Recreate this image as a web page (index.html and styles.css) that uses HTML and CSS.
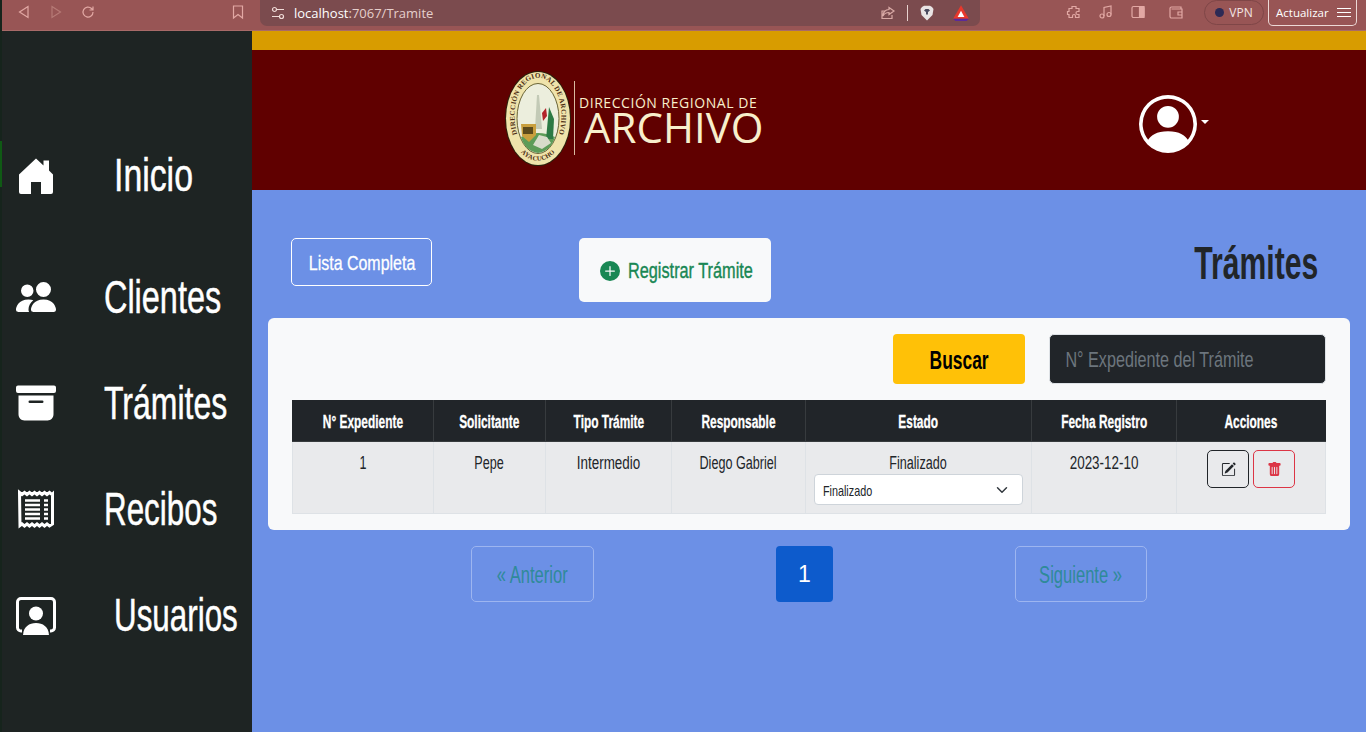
FILE: index.html
```html
<!DOCTYPE html>
<html lang="es">
<head>
  <meta charset="UTF-8" />
  <meta name="viewport" content="width=device-width, initial-scale=1.0"/>
  <title>Tramite</title>
  <link rel="stylesheet" href="styles.css">
</head>
<body>

  <!-- Browser bar -->
  <div class="browser-bar">
    <div class="bar-left">
      <svg class="bar-icon" viewBox="0 0 16 16"><path d="M12 2.5 3.5 8l8.500 5.500z"/></svg>
      <svg class="bar-icon dim" viewBox="0 0 16 16"><path d="M4 2.500 12.500 8 4 13.500z"/></svg>
      <svg class="bar-icon" viewBox="0 0 16 16"><path d="M13 8a5 5 0 1 1-1.500-3.500L13 6M13 2.500V6H9.500"/></svg>
      <svg class="bar-icon bookmark" viewBox="0 0 16 16"><path d="M3.500 2h9v12L8 10.500 3.500 14z"/></svg>
    </div>
    <div class="address">
      <svg class="bar-icon tune" viewBox="0 0 16 16"><circle cx="4.500" cy="4.500" r="2"/><path d="M7 4.500h7M2 11.500h7"/><circle cx="11.500" cy="11.500" r="2"/></svg>
      <span class="url"><b>localhost</b>:7067/Tramite</span>
      <svg class="bar-icon share" viewBox="0 0 16 16"><path d="M9 2.500 14 6l-5 3.500V7.500C6 7.500 4 9 3 11c0-4 2.500-6.500 6-6.500zM12 10v3.500H2V6h2.500"/></svg>
      <span class="addr-sep"></span>
      <svg class="shield" viewBox="0 0 16 16"><path d="M3 2 5 .8h6L13 2l1.500 2-1 6L8 15.500 2.500 10l-1-6z"/><path class="shield-face" d="M5 5.500 7 7v2L8 10l1-1V7l2-1.500L9.500 4h-3z"/></svg>
      <svg class="rewards" viewBox="0 0 16 16"><path class="tri-red" d="M8 1 15 13H1z"/><path class="tri-white" d="M8 6 11 11.500H5z"/><path class="tri-purple" d="M1 13h14l-2 2H3z"/></svg>
    </div>
    <div class="bar-right">
      <svg class="bar-icon" viewBox="0 0 16 16"><path d="M6 2.500h4v2h3v3h-1.500a1.500 1.500 0 0 0 0 3H13v3H9.500V12a1.500 1.500 0 0 0-3 0v1.500H3v-3H1.500v-3H3v-3h3z"/></svg>
      <svg class="bar-icon" viewBox="0 0 16 16"><path d="M6 12V3.500l7-1.500v8.500"/><circle cx="4" cy="12" r="2"/><circle cx="11" cy="10.500" r="2"/></svg>
      <svg class="bar-icon" viewBox="0 0 16 16"><rect x="2" y="2.500" width="12" height="11" rx="1.500"/><path class="panel-fill" d="M9.500 2.500H14v11H9.500z"/></svg>
      <svg class="bar-icon wallet" viewBox="0 0 16 16"><path d="M13 5V3H3.500A1.500 1.500 0 0 0 2 4.500v8A1.500 1.500 0 0 0 3.500 14H14V5H3.500M10 8h4v3h-4z"/></svg>
      <div class="vpn"><span class="vpn-dot"></span>VPN</div>
      <div class="update">Actualizar<span class="burger"><i></i><i></i><i></i></span></div>
    </div>
  </div>

  <div class="app">
    <!-- Sidebar -->
    <nav class="sidebar">
      <a class="nav-item first">
        <svg class="nav-icon" viewBox="0 0 40 40"><path d="M3 19.500 20 3.500l7.500 7V5.500H33V15.500l4 4V37a2 2 0 0 1-2 2H25V27H15V39H5a2 2 0 0 1-2-2z"/></svg>
        <span class="nav-text indent home">Inicio</span>
      </a>
      <a class="nav-item">
        <svg class="nav-icon" viewBox="0 0 16 16"><path d="M7 14s-1 0-1-1 1-4 5-4 5 3 5 4-1 1-1 1H7Zm4-6a3 3 0 1 0 0-6 3 3 0 0 0 0 6Zm-5.784 6A2.238 2.238 0 0 1 5 13c0-1.355.68-2.750 1.936-3.720A6.325 6.325 0 0 0 5 9c-4 0-5 3-5 4s1 1 1 1h4.216ZM4.500 8a2.500 2.500 0 1 0 0-5 2.500 2.500 0 0 0 0 5Z"/></svg>
        <span class="nav-text clients">Clientes</span>
      </a>
      <a class="nav-item">
        <svg class="nav-icon" viewBox="0 0 16 16"><path d="M12.643 15C13.979 15 15 13.845 15 12.500V5H1v7.500C1 13.845 2.021 15 3.357 15h9.286zM5.500 7h5a.5.5 0 0 1 0 1h-5a.5.5 0 0 1 0-1zM.8 1a.8.8 0 0 0-.8.8v1.400a.8.8 0 0 0 .8.8h14.400a.8.8 0 0 0 .8-.8V1.800a.8.8 0 0 0-.8-.8H.8z"/></svg>
        <span class="nav-text">Trámites</span>
      </a>
      <a class="nav-item">
        <svg class="nav-icon" viewBox="0 0 40 40"><path class="receipt" d="M3.500 3.500l2.500 2 2.500-2 2.500 2 2.500-2 2.500 2 2.500-2 2.500 2 2.500-2 2.500 2 2.500-2 2.500 2 2.500-2 2.500 2 .5-.5V35l-3 2-2.500-2-2.500 2-2.500-2-2.500 2-2.500-2-2.500 2-2.500-2-2.500 2-2.500-2-2.500 2-2.500-2-2 1.500z"/><path class="receipt-lines" d="M9 11.500h15M9 16h15M9 20.500h15M9 25h15M9 29.500h15M28 11.500h4M28 16h4M28 20.500h4M28 25h4M28 29.500h4"/></svg>
        <span class="nav-text small">Recibos</span>
      </a>
      <a class="nav-item">
        <svg class="nav-icon" viewBox="0 0 40 40"><path class="screen" d="M6 36H5a3.500 3.500 0 0 1-3.500-3.500V7A3.500 3.500 0 0 1 5 3.500h30A3.500 3.500 0 0 1 38.500 7v25.500A3.500 3.500 0 0 1 35 36h-1"/><circle cx="20" cy="18.500" r="7"/><path d="M7 41c0-9 6-13 13-13s13 4 13 13z"/></svg>
        <span class="nav-text indent small">Usuarios</span>
      </a>
    </nav>

    <div class="main">
      <div class="gold-bar"></div>

      <header class="top-header">
        <div class="logo">
          <svg class="seal" viewBox="0 0 66 95">
            <defs>
              <path id="sealTop" d="M13.500 66A23.500 38 0 1 1 52.500 66"/>
              <path id="sealBottom" d="M14 79A29 43.500 0 0 0 52 79"/>
            </defs>
            <ellipse cx="33" cy="47.500" rx="33" ry="47.500" fill="#2a210c"/>
            <ellipse cx="33" cy="47.500" rx="32" ry="46.500" fill="#efe3ab"/>
            <ellipse cx="33" cy="47.500" rx="21" ry="35" fill="#eceedd" stroke="#6a6436"/>
            <path d="M16 66Q33 58 50 66Q46 80 33 82Q20 80 16 66Z" fill="#5d9c58"/>
            <path d="M30 58 32 24h2l3 34z" fill="#c3cab6"/>
            <path d="M16 53h15v11l-7 7-7-6z" fill="#c99f3e"/>
            <path d="M18 56h10v7H18z" fill="#5c4a1c"/>
            <path d="M44 36l5 12-1 20H41z" fill="#2d7a45"/>
            <path d="M37 42l4-5 1 8-4 5z" fill="#b3232a"/>
            <path d="M28 74l6-10 8 2 4 6-9 6z" fill="#d8dccb"/>
            <text class="seal-text"><textPath href="#sealTop" startOffset="50%" text-anchor="middle">DIRECCIÓN REGIONAL DE ARCHIVO</textPath></text>
            <text class="seal-text low"><textPath href="#sealBottom" startOffset="50%" text-anchor="middle">AYACUCHO</textPath></text>
          </svg>
          <span class="logo-sep"></span>
          <div class="logo-text">
            <div class="logo-small">DIRECCIÓN REGIONAL DE</div>
            <div class="logo-big">ARCHIVO</div>
          </div>
        </div>
        <div class="user-menu">
          <svg class="avatar" viewBox="0 0 16 16"><path d="M11 6a3 3 0 1 1-6 0 3 3 0 0 1 6 0z"/><path fill-rule="evenodd" d="M0 8a8 8 0 1 1 16 0A8 8 0 0 1 0 8zm8-7a7 7 0 0 0-5.468 11.370C3.242 11.226 4.805 10 8 10s4.757 1.225 5.468 2.370A7 7 0 0 0 8 1z"/></svg>
          <span class="caret"></span>
        </div>
      </header>

      <section class="content">
        <div class="toolbar">
          <button class="btn-outline"><span class="narrow">Lista Completa</span></button>
          <button class="btn-register">
            <svg viewBox="0 0 16 16"><path d="M16 8A8 8 0 1 1 0 8a8 8 0 0 1 16 0zM8.500 4.500a.5.5 0 0 0-1 0v3h-3a.5.5 0 0 0 0 1h3v3a.5.5 0 0 0 1 0v-3h3a.5.5 0 0 0 0-1h-3v-3z"/></svg>
            <span class="narrow">Registrar Trámite</span>
          </button>
          <h1><span class="narrow">Trámites</span></h1>
        </div>

        <div class="card">
          <div class="search-row">
            <button class="btn-search"><span class="narrow">Buscar</span></button>
            <div class="search-box">
              <input class="search-input" type="text" placeholder="N° Expediente del Trámite">
            </div>
          </div>
          <table class="data-table">
            <colgroup>
              <col class="c1"><col class="c2"><col class="c3"><col class="c4"><col class="c5"><col class="c6"><col class="c7">
            </colgroup>
            <thead>
              <tr>
                <th><span class="narrow">N° Expediente</span></th>
                <th><span class="narrow">Solicitante</span></th>
                <th><span class="narrow">Tipo Trámite</span></th>
                <th><span class="narrow">Responsable</span></th>
                <th><span class="narrow">Estado</span></th>
                <th><span class="narrow">Fecha Registro</span></th>
                <th><span class="narrow">Acciones</span></th>
              </tr>
            </thead>
            <tbody>
              <tr>
                <td><span class="narrow">1</span></td>
                <td><span class="narrow">Pepe</span></td>
                <td><span class="narrow wider">Intermedio</span></td>
                <td><span class="narrow">Diego Gabriel</span></td>
                <td>
                  <span class="narrow">Finalizado</span>
                  <div class="state-box">
                    <select class="state-select"><option>Finalizado</option></select>
                  </div>
                </td>
                <td><span class="narrow wider">2023-12-10</span></td>
                <td>
                  <div class="actions">
                    <button class="btn-edit"><svg viewBox="0 0 16 16"><path d="M15.502 1.940a.5.5 0 0 1 0 .706L14.459 3.690l-2-2L13.502.646a.5.5 0 0 1 .707 0l1.293 1.293zm-1.750 2.456-2-2L4.939 9.210a.5.5 0 0 0-.121.196l-.805 2.414a.25.25 0 0 0 .316.316l2.414-.805a.5.5 0 0 0 .196-.12l6.813-6.814z"/><path fill-rule="evenodd" d="M1 13.500A1.500 1.500 0 0 0 2.500 15h11a1.500 1.500 0 0 0 1.500-1.500v-6a.5.5 0 0 0-1 0v6a.5.5 0 0 1-.5.5h-11a.5.5 0 0 1-.5-.5v-11a.5.5 0 0 1 .5-.5H9a.5.5 0 0 0 0-1H2.500A1.500 1.500 0 0 0 1 2.500v11z"/></svg></button>
                    <button class="btn-delete"><svg viewBox="0 0 16 16"><path d="M2.500 1a1 1 0 0 0-1 1v1a1 1 0 0 0 1 1H3v9a2 2 0 0 0 2 2h6a2 2 0 0 0 2-2V4h.5a1 1 0 0 0 1-1V2a1 1 0 0 0-1-1H10a1 1 0 0 0-1-1H7a1 1 0 0 0-1 1H2.500zm3 4a.5.5 0 0 1 .5.5v7a.5.5 0 0 1-1 0v-7a.5.5 0 0 1 .5-.5zM8 5a.5.5 0 0 1 .5.5v7a.5.5 0 0 1-1 0v-7A.5.5 0 0 1 8 5zm3 .5v7a.5.5 0 0 1-1 0v-7a.5.5 0 0 1 1 0z"/></svg></button>
                  </div>
                </td>
              </tr>
            </tbody>
          </table>
        </div>

        <div class="pager">
          <button class="page-btn prev"><span class="narrow">« Anterior</span></button>
          <button class="page-num">1</button>
          <button class="page-btn next"><span class="narrow">Siguiente »</span></button>
        </div>
      </section>
    </div>
  </div>

</body>
</html>
```

FILE: styles.css
```css
* {
  box-sizing: border-box;
}

html, body {
  height: 100%;
}

body {
  margin: 0;
  overflow: hidden;
  background-color: #16241c;
  font-family: "Liberation Sans", sans-serif;
  display: flex;
  flex-direction: column;
}

button {
  padding: 0;
  font-family: inherit;
  cursor: pointer;
}

/* no condensed family is installed, so the text is squeezed */
.narrow {
  display: inline-block;
  white-space: nowrap;
  transform: scaleX(0.7);
}

.narrow.wider {
  transform: scaleX(0.745);
}

/* Browser bar */
.browser-bar {
  height: 31px;
  margin-left: 2px;
  display: flex;
  background-color: #985555;
  border-bottom: 1px solid #a86a68;
  font-family: "Open Sans", sans-serif;
}

.bar-left {
  width: 258px;
  padding: 4px 0 0 14px;
  display: flex;
  gap: 16px;
}

.bar-icon {
  width: 16px;
  height: 16px;
  fill: none;
  stroke: #e2a8a4;
  stroke-width: 1.2;
}

.bar-icon.dim {
  stroke: #b67a76;
}

.bookmark {
  margin-left: 118px;
}

.address {
  width: 720px;
  height: 26px;
  padding: 0 10px;
  display: flex;
  align-items: center;
  background-color: #7b4b4e;
  border-radius: 0 0 7px 7px;
}

.tune {
  stroke: #f0dcd8;
}

.url {
  margin-left: 8px;
  font-size: 13px;
  color: #e6cfcc;
  flex: 1;
}

.url b {
  font-weight: 400;
  color: #fff;
}

.share {
  stroke: #d9a9a5;
}

.addr-sep {
  width: 1px;
  height: 16px;
  margin: 0 11px;
  background-color: #e8d2cf;
}

.shield {
  width: 16px;
  height: 16px;
  fill: #e9e4e4;
}

.shield-face {
  fill: #4a4a5e;
}

.rewards {
  width: 18px;
  height: 18px;
  margin-left: 17px;
}

.tri-red {
  fill: #e8382c;
}

.tri-white {
  fill: #fff;
}

.tri-purple {
  fill: #5b2a9a;
}

.bar-right {
  flex: 1;
  padding: 4px 9px 0 86px;
  display: flex;
  gap: 16px;
}

.panel-fill {
  fill: #e2a8a4;
}

.wallet {
  margin-left: 6px;
}

.vpn {
  width: 60px;
  height: 25px;
  margin: -4px -12px 0 4px;
  display: flex;
  align-items: center;
  justify-content: center;
  gap: 5px;
  font-size: 12px;
  color: #f4e6e4;
  border: 1px solid #7f4647;
  border-radius: 13px;
}

.vpn-dot {
  width: 9px;
  height: 9px;
  border-radius: 50%;
  background-color: #2c2a55;
}

.update {
  width: 89px;
  height: 26px;
  margin-top: -4px;
  padding: 0 5px 0 7px;
  display: flex;
  align-items: center;
  justify-content: space-between;
  font-size: 11.500px;
  color: #fff;
  border: 1px solid #ecd9d6;
  border-top: none;
  border-radius: 0 0 5px 5px;
}

.burger {
  width: 14px;
  display: flex;
  flex-direction: column;
  gap: 3px;
}

.burger i {
  height: 1px;
  background-color: #fff;
}

/* App layout */
.app {
  flex: 1;
  display: flex;
  min-height: 0;
}

.sidebar {
  position: relative;
  width: 250px;
  margin-left: 2px;
  padding-top: 91px;
  background-color: #1e2423;
}

.sidebar::before {
  content: "";
  position: absolute;
  left: -2px;
  top: 110px;
  width: 2px;
  height: 46px;
  background-color: #0f5a14;
}

.nav-item {
  height: 106px;
  padding-left: 14px;
  display: flex;
  align-items: center;
  gap: 48px;
  color: #fff;
}

.nav-item.first {
  margin-bottom: 16px;
}

.nav-icon {
  width: 40px;
  height: 40px;
  fill: #fff;
  flex: none;
}

.nav-text {
  white-space: nowrap;
  font-size: 46px;
  -webkit-text-stroke: 0.5px #fff;
  transform: scaleX(0.695);
  transform-origin: left center;
}

.nav-text.home {
  transform: scaleX(0.735);
}

.nav-text.clients {
  transform: scaleX(0.705);
}

.nav-text.small {
  transform: scaleX(0.682);
}

.nav-text.indent {
  margin-left: 10px;
}

.receipt, .receipt-lines, .screen {
  fill: none;
  stroke: #fff;
}

.receipt, .screen {
  stroke-width: 3;
}

.receipt-lines {
  stroke-width: 2.500;
}

.main {
  flex: 1;
  min-width: 0;
  display: flex;
  flex-direction: column;
  background-color: #6c90e6;
}

.gold-bar {
  height: 19px;
  background-color: #d89c00;
}

/* Header */
.top-header {
  height: 140px;
  padding: 21px 0 0 253px;
  display: flex;
  background-color: #600000;
}

.logo {
  width: 634px;
  height: 95px;
  display: flex;
}

.seal {
  width: 66px;
  height: 95px;
  flex: none;
}

.seal-text {
  font-family: "Liberation Serif", serif;
  font-weight: 700;
  font-size: 7px;
  letter-spacing: 0.25px;
  fill: #4a2a10;
}

.seal-text.low {
  font-size: 6.500px;
}

.logo-sep {
  width: 1px;
  height: 74px;
  margin: 10px 4px 0 3px;
  background-color: #d9b9a0;
}

.logo-text {
  padding-top: 23px;
  font-family: "Open Sans", sans-serif;
  color: #f8efcc;
}

.logo-small {
  font-size: 14px;
  line-height: 17px;
  letter-spacing: 0.55px;
  white-space: nowrap;
}

.logo-big {
  margin: 1px 0 0 5px;
  font-size: 42px;
  line-height: 30px;
}

.user-menu {
  margin-top: 24px;
  display: flex;
  align-items: center;
  align-self: flex-start;
  gap: 4px;
}

.avatar {
  width: 58px;
  height: 58px;
  fill: #fff;
}

.caret {
  margin-bottom: 4px;
  border-top: 4px solid #fff;
  border-left: 4px solid transparent;
  border-right: 4px solid transparent;
}

/* Content */
.content {
  flex: 1;
  padding: 48px 16px 0 16px;
}

.toolbar {
  height: 80px;
  padding-left: 23px;
  display: flex;
  align-items: flex-start;
}

.btn-outline {
  width: 141px;
  height: 48px;
  padding-top: 1px;
  font-size: 21px;
  color: #fff;
  background: transparent;
  border: 1px solid #fff;
  border-radius: 5px;
}

.btn-outline .narrow {
  transform: scaleX(0.76);
  -webkit-text-stroke: 0.3px #fff;
}

.btn-register {
  width: 192px;
  height: 64px;
  margin-left: 147px;
  padding: 2px 0 0 21px;
  display: flex;
  align-items: center;
  gap: 8px;
  font-size: 22px;
  color: #198754;
  background-color: #f8f9fa;
  border: none;
  border-radius: 5px;
}

.btn-register .narrow {
  transform: scaleX(0.74);
  transform-origin: left center;
  -webkit-text-stroke: 0.4px #198754;
}

.btn-register svg {
  width: 20px;
  height: 20px;
  fill: #198754;
  flex: none;
}

h1 {
  margin: 0 32px 0 auto;
  font-size: 46px;
  line-height: 50px;
  font-weight: 700;
  color: #212529;
}

h1 .narrow {
  transform: scaleX(0.655);
  transform-origin: right center;
}

.card {
  padding: 16px 24px;
  background-color: #f8f9fa;
  border-radius: 6px;
}

.search-row {
  height: 50px;
  margin-bottom: 16px;
  display: flex;
  justify-content: flex-end;
  gap: 24px;
}

.btn-search {
  width: 132px;
  padding-top: 3px;
  font-size: 26px;
  font-weight: 700;
  color: #000;
  background-color: #ffc107;
  border: none;
  border-radius: 4px;
}

.btn-search .narrow {
  transform: scaleX(0.67);
}

.search-box {
  width: 277px;
  overflow: hidden;
  background-color: #212529;
  border: 1px solid #dee2e6;
  border-radius: 5px;
}

.search-input {
  width: 376px;
  height: 100%;
  padding: 2px 0 0 21px;
  font-family: inherit;
  font-size: 22px;
  color: #fff;
  background: transparent;
  border: none;
  transform: scaleX(0.735);
  transform-origin: left center;
}

.search-input::placeholder {
  color: #6c757d;
}

/* Table */
.data-table {
  width: calc(100% - 1px);
  table-layout: fixed;
  border-collapse: collapse;
  text-align: center;
}

.c1 { width: 141px; }
.c2 { width: 112px; }
.c3 { width: 126px; }
.c4 { width: 134px; }
.c5 { width: 226px; }
.c6 { width: 145px; }
.c7 { width: 149px; }

th {
  height: 41px;
  padding: 2px 0 0 0;
  font-size: 17.500px;
  font-weight: 700;
  color: #fff;
  background-color: #212529;
  border: 1px solid #373b3e;
  border-top-color: #212529;
}

th .narrow {
  transform: scaleX(0.68);
  -webkit-text-stroke: 0.3px #fff;
}

th:first-child {
  border-left-color: #212529;
}

th:last-child {
  border-right-color: #212529;
}

td {
  height: 72px;
  padding: 10px 8px 8px 8px;
  vertical-align: top;
  font-size: 18px;
  line-height: 22px;
  color: #212529;
  background-color: #e9eaec;
  border: 1px solid #dee2e6;
}

.state-box {
  height: 31px;
  overflow: hidden;
  background: #fff url("data:image/svg+xml,%3Csvg xmlns='http://www.w3.org/2000/svg' viewBox='0 0 16 16'%3E%3Cpath fill='none' stroke='%23343a40' stroke-width='2' stroke-linecap='round' stroke-linejoin='round' d='m2 5 6 6 6-6'/%3E%3C/svg%3E") no-repeat right 14px center / 12px 12px;
  border: 1px solid #ced4da;
  border-radius: 4px;
}

.state-select {
  display: block;
  width: 290px;
  height: 100%;
  padding: 1px 0 0 11px;
  font-family: inherit;
  font-size: 15px;
  color: #212529;
  appearance: none;
  background: transparent;
  border: none;
  transform: scaleX(0.72);
  transform-origin: left center;
}

.actions {
  margin-top: -2px;
  display: flex;
  justify-content: center;
  gap: 4px;
}

.btn-edit, .btn-delete {
  width: 42px;
  height: 38px;
  display: flex;
  align-items: center;
  justify-content: center;
  background: transparent;
  border-radius: 5px;
}

.btn-edit {
  border: 1px solid #212529;
}

.btn-delete {
  border: 1px solid #dc3545;
}

.btn-edit svg, .btn-delete svg {
  width: 15px;
  height: 15px;
}

.btn-edit svg {
  fill: #212529;
}

.btn-delete svg {
  fill: #dc3545;
}

/* Pagination */
.pager {
  margin-top: 16px;
  padding-left: 203px;
  display: flex;
}

.page-btn {
  height: 56px;
  padding-top: 2px;
  font-size: 23px;
  color: #2f8a99;
  background: transparent;
  border: 1px solid #9db5f0;
  border-radius: 5px;
}

.page-btn .narrow {
  transform: scaleX(0.72);
}

.prev {
  width: 123px;
}

.next {
  width: 132px;
  margin-left: 182px;
}

.page-num {
  width: 57px;
  height: 56px;
  margin-left: 182px;
  font-size: 23px;
  color: #fff;
  background-color: #0d5bcc;
  border: none;
  border-radius: 4px;
}
```
